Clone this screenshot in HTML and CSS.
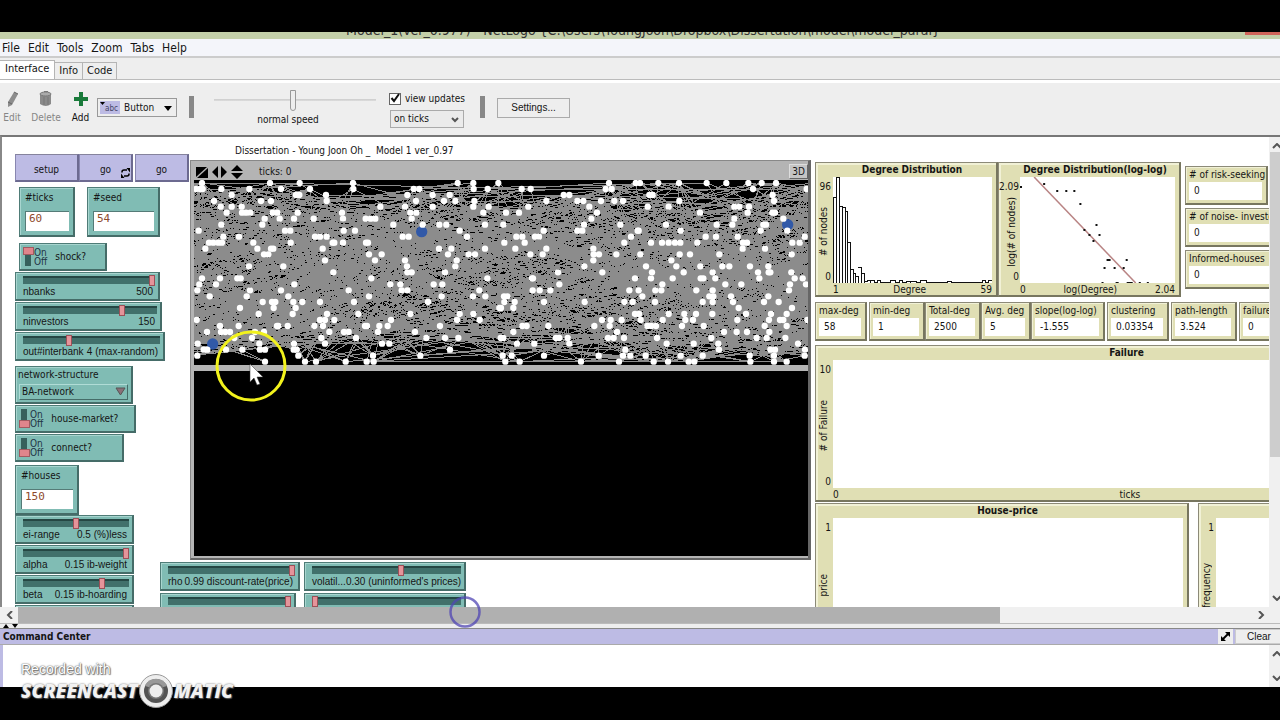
FILE: index.html
```html
<!DOCTYPE html>
<html lang="en">
<head>
<meta charset="utf-8">
<title>NetLogo</title>
<link rel="stylesheet" href="styles.css">
</head>
<body>
<div class="window">
  <header class="titlebar"><span class="title-text">Model_1(ver_0.977) - NetLogo {C:\Users\YoungJoon\Dropbox\Dissertation\model\model_paral}</span><i class="close-edge"></i></header>
  <nav class="menubar"><button>File</button><button>Edit</button><button>Tools</button><button>Zoom</button><button>Tabs</button><button>Help</button></nav>
  <nav class="tabs"><button class="tab active">Interface</button><button class="tab">Info</button><button class="tab">Code</button></nav>

  <div class="toolbar">
    <button class="tool muted edit"><svg width="16" height="18" viewBox="0 0 16 18"><path d="M10 2l4 2-6 11-4 2V12z" fill="#8d8d8d"/><path d="M10 2l4 2M4 12l4 2" stroke="#666"/></svg>Edit</button>
    <button class="tool muted delete"><svg width="16" height="18" viewBox="0 0 16 18"><path d="M2 4v10q6 4 11 0V4z" fill="#8a8a8a"/><ellipse cx="7.500" cy="4" rx="5.500" ry="2" fill="#aaa" stroke="#777"/><path d="M6 1.500h4M6 7v8M10 7v8" stroke="#777" fill="none"/></svg>Delete</button>
    <button class="tool add"><svg width="16" height="18" viewBox="0 0 16 18"><path d="M6 2h4v5h5v4h-5v5H6v-5H1V7h5z" fill="#197a3a"/></svg>Add</button>
    <label class="widget-type"><span class="abc"><svg width="5" height="4" viewBox="0 0 5 4"><path d="M0 1h5L2.500 4z"/></svg>abc</span><select aria-label="Widget type"><option>Button</option></select><svg class="drop" width="8" height="5" viewBox="0 0 8 5"><path d="M0 0h8L4 5z"/></svg></label>
    <i class="divider"></i>
    <label class="speed"><input type="range" min="0" max="100" value="49"><span>normal speed</span></label>
    <div class="updates">
      <label class="check"><input type="checkbox" checked><svg width="12" height="12" viewBox="0 0 12 12"><path d="M2.500 6l2.500 3 5-7" fill="none" stroke="#111" stroke-width="2"/></svg>view updates</label>
      <label class="tick-mode"><select aria-label="Update mode"><option>on ticks</option></select><svg class="drop" width="8" height="6" viewBox="0 0 8 6"><path d="M1 1l3 3 3-3" fill="none" stroke="#555" stroke-width="2"/></svg></label>
    </div>
    <i class="divider"></i>
    <button class="settings">Settings...</button>
  </div>

  <main class="workspace">
    <div class="board">
      <section class="controls">
        <div class="row buttons"><button class="action w64">setup</button><button class="action w54">go<svg width="9" height="10" viewBox="0 0 9 10"><path d="M1 4.500V4q0-2 2-2h3M8 5.500V6q0 2-2 2H3" fill="none" stroke="#000" stroke-width="1.500"/><path d="M5.500 0H9v4.500zM3.500 10H0V5.500z"/></svg></button><button class="action w54 apart">go</button></div>
        <div class="row inputs"><label class="field w56">#ticks<input type="text" value="60"></label><label class="field w73">#seed<input type="text" value="54"></label></div>
        <label class="switch shock w88"><input type="checkbox" checked><span class="onoff">On<br>Off</span>shock?</label>
        <label class="slider w145"><input type="range" value="100"><span><b>nbanks</b><b>500</b></span></label>
        <label class="slider w147"><input type="range" value="75"><span><b>ninvestors</b><b>150</b></span></label>
        <label class="slider w150"><input type="range" value="33"><span><b>out#interbank</b><b>4 (max-random)</b></span></label>
        <label class="chooser w118">network-structure<select><option>BA-network</option></select><svg width="11" height="9" viewBox="0 0 11 9"><path d="M1 1h9L5.500 8z" fill="#8b6f78" stroke="#555"/></svg></label>
        <label class="switch w121"><input type="checkbox"><span class="onoff">On<br>Off</span>house-market?</label>
        <label class="switch w109"><input type="checkbox"><span class="onoff">On<br>Off</span>connect?</label>
        <label class="field houses w64">#houses<input type="text" value="150"></label>
        <div class="stack">
          <label class="slider w119"><input type="range" value="50"><span><b>ei-range</b><b>0.5 (%)less</b></span></label>
          <label class="slider w119"><input type="range" value="100"><span><b>alpha</b><b>0.15 ib-weight</b></span></label>
          <label class="slider w119"><input type="range" value="76"><span><b>beta</b><b>0.15 ib-hoarding</b></span></label>
          <label class="slider w119"><input type="range" value="50" aria-label="parameter"></label>
        </div>
      </section>

      <section class="center">
        <h1 class="note">Dissertation - Young Joon Oh _&nbsp; Model 1 ver_0.97</h1>
        <div class="view">
          <div class="view-head">
            <svg width="48" height="14" viewBox="0 0 48 14"><path d="M0 2h11L0 12z"/><path d="M12 3v10H1z"/><path d="M22 1v12l-6-6zM25 1v12l6-6zM35 6l6-6 6 6zM35 8l6 6 6-6z"/></svg>
            <span>ticks: 0</span>
            <button class="three-d">3D</button>
          </div>
          <svg id="network" class="network" viewBox="0 0 1842 555" preserveAspectRatio="none"></svg>
          <div class="view-gap"></div>
          <div class="view-empty"></div>
        </div>
        <div class="row params">
          <label class="slider w140"><input type="range" value="100"><span><b>rho</b><b>0.99 discount-rate(price)</b></span></label>
          <label class="slider w162"><input type="range" value="60"><span><b>volatil...</b><b>0.30 (uninformed's prices)</b></span></label>
        </div>
        <div class="row params">
          <label class="slider w136"><input type="range" value="100" aria-label="parameter"></label>
          <label class="slider w162 late"><input type="range" value="0" aria-label="parameter"></label>
        </div>
      </section>

      <section class="charts">
        <div class="row top-charts">
          <figure class="plot w183 short">
            <figcaption>Degree Distribution</figcaption>
            <div class="yaxis"><span>96</span><em>#&nbsp;of&nbsp;nodes</em><span>0</span></div>
            <svg class="area" viewBox="0 0 158 106" preserveAspectRatio="none"><path d="M.5 106V20H3V0H6V106M3 20V106M6 29H9V106M9 30H12V106M12 34H14V65H17V106M14 65V106M17 92H20V106M20 96H22V106M22 99H25V106M25 90H28V106M28 96H31V106M31 104H34V103H41V105H44V103H47V105H57V103H62V105H66V103H69V105H73V104H83V105H87V103H93V105H114V104H118V105H149V103H152V105H155V103H158M37 103V106M57 103V106M62 103V106M77 104V106" fill="none" stroke="#111" stroke-width="1" shape-rendering="crispEdges"/></svg>
            <div class="xaxis"><span>1</span><span>Degree</span><span>59</span></div>
          </figure>
          <figure class="plot w183 short">
            <figcaption>Degree Distribution(log-log)</figcaption>
            <div class="yaxis"><span>2.09</span><em>log(#&nbsp;of&nbsp;nodes)</em><span>0</span></div>
            <svg class="area" viewBox="0 0 154 106" preserveAspectRatio="none"><path d="M14 0L115 106" stroke="#b98484" stroke-width="1.500"/><path d="M0 10h2m21-3h2m11 7h2m7 0h2m6 0h2m4 13h2m14 21h2m-14 5h2m3 5h2m8 0h2m-8 6h2m12 19h2m0 0h2m15 0h2m-24 8h2m8 0h2m7 0h2m-23 15h2m12 0h3m8 0h6m6 0h2m6 0h2" fill="none" stroke="#111" stroke-width="2"/></svg>
            <div class="xaxis"><span>0</span><span>log(Degree)</span><span>2.04</span></div>
          </figure>
          <div class="side">
            <label class="monitor w83"># of risk-seeking<output>0</output></label>
            <label class="monitor wide"># of noise- investors<output>0</output></label>
            <label class="monitor wide">Informed-houses<output>0</output></label>
          </div>
        </div>
        <div class="row monitors">
          <label class="monitor w52">max-deg<output>58</output></label>
          <span class="joined"><label class="monitor w56">min-deg<output>1</output></label><label class="monitor w56">Total-deg<output>2500</output></label><label class="monitor w50">Avg. deg<output>5</output></label><label class="monitor w74">slope(log-log)<output>-1.555</output></label></span>
          <label class="monitor w62">clustering<output>0.03354</output></label>
          <label class="monitor w66">path-length<output>3.524</output></label>
          <label class="monitor w66">failure<output>0</output></label>
        </div>
        <figure class="plot failure">
          <figcaption>Failure</figcaption>
          <div class="yaxis"><span>10</span><em>#&nbsp;of&nbsp;Failure</em><span>0</span></div>
          <div class="area"></div>
          <div class="xaxis"><span>0</span><span>ticks</span><span></span></div>
        </figure>
        <div class="row bottom-charts">
          <figure class="plot w374 tall">
            <figcaption>House-price</figcaption>
            <div class="yaxis"><span>1</span><em>price</em><span>0</span></div>
            <div class="area"></div>
            <div class="xaxis"></div>
          </figure>
          <figure class="plot w374 tall">
            <figcaption></figcaption>
            <div class="yaxis"><span>1</span><em>frequency</em><span>0</span></div>
            <div class="area"></div>
            <div class="xaxis"></div>
          </figure>
        </div>
      </section>
    </div>
    <div class="vbar"><svg width="10" height="6" viewBox="0 0 10 6"><path d="M3 5l4-4 4 4" /></svg><i class="vthumb"></i><i class="vrest"></i><svg width="10" height="6" viewBox="0 0 10 6"><path d="M3 1l4 4 4-4"/></svg></div>
  </main>
  <div class="hbar"><svg width="16" height="8" viewBox="0 0 16 8"><path d="M10 0L6 4l4 4"/></svg><i class="hthumb"></i><i class="hrest"></i><svg width="38" height="8" viewBox="0 0 38 8"><path d="M17 0l4 4-4 4"/></svg></div>
  <div class="splitter"><svg width="18" height="4" viewBox="0 0 18 4"><path d="M3 4l3-4 3 4zM12 0h6l-3 4z"/></svg></div>
  <div class="command-head"><h2>Command Center</h2><button class="expand" aria-label="Expand"><svg width="9" height="9" viewBox="0 0 9 9"><path d="M4 0h5v5zM0 4v5h5z"/><path d="M2 7l5-5" stroke="#000" stroke-width="2"/></svg></button><button class="clear">Clear</button></div>
  <div class="output"><div class="vbar mini"><svg width="10" height="6" viewBox="0 0 10 6"><path d="M3 5l4-4 4 4"/></svg><svg width="10" height="6" viewBox="0 0 10 6"><path d="M3 1l4 4 4-4"/></svg></div></div>
</div>

<svg class="halo" width="72" height="72" viewBox="0 0 72 72"><circle cx="36" cy="36" r="34" fill="none" stroke="#f2f21c" stroke-width="3"/><path d="M35 34v18l4-4 3 7 3-1-3-7h6z" fill="#fff" stroke="#333" stroke-width=".5"/></svg>
<svg class="ripple" width="34" height="34" viewBox="0 0 34 34"><circle cx="17" cy="17" r="14.500" fill="none" stroke="#5046b4" stroke-opacity=".75" stroke-width="2.500"/></svg>
<div class="watermark">
  <div class="recorded">Recorded with</div>
  <div class="brand"><span>SCREENCAST</span><svg width="36" height="36" viewBox="0 0 36 36"><circle cx="18" cy="18" r="16.500" fill="#eee" stroke="#999"/><circle cx="18" cy="18" r="12" fill="#555"/><path d="M7 13A12 12 0 0 1 29 13L22 15H14z" fill="#999"/><circle cx="18" cy="18" r="8" fill="#777"/><circle cx="18" cy="18" r="6.500" fill="#eee"/></svg><span>MATIC</span></div>
</div>
<script src="app.js"></script>
</body>
</html>
```
FILE: styles.css
```css
* { box-sizing: border-box; }
body {
  margin: 0; background: #000; color: #151515; position: relative; overflow: hidden;
  font: 10px/12px "DejaVu Sans Condensed", "Open Sans", sans-serif;
}
button, input, select, output { font: inherit; color: inherit; margin: 0; padding: 0; border: 0; }
button { background: none; }
select { appearance: none; }
svg { display: block; flex: none; }
i { display: block; flex: none; }
.window { height: 100vh; padding: 32px 0 33px; display: flex; flex-direction: column; }
.window > * { flex: none; }

.titlebar { height: 7px; background: #c3cfa9; display: flex; justify-content: center; align-items: flex-end; overflow: hidden; position: relative; padding-bottom: 1px; }
.title-text { font: 14px/16px "DejaVu Sans Condensed", "Open Sans", sans-serif; white-space: nowrap; color: #333; padding-left: 6px; }
.close-edge { position: absolute; right: 0; top: 0; width: 35px; height: 3px; background: #d0645a; }
.menubar { height: 19px; background: #f4f5fa; border-bottom: 2px solid #ccc; display: flex; gap: 8px; padding-left: 2px; font-size: 12px; }
.tabs { height: 25px; background: #eee; display: flex; align-items: flex-start; border-bottom: 3px solid #fff; box-shadow: inset 0 -1px #bbb; font-size: 11px; }
.tab { height: 18px; margin-top: 4px; border: 1px solid #b5b5b5; border-left: 0; padding: 0 4px; }
.tab.active { height: 20px; margin-top: 2px; background: #fff; padding: 0 5px 3px; }

.toolbar { height: 52px; background: #eee; display: flex; }
.tool { display: flex; flex-direction: column; align-items: center; padding-top: 7px; gap: 4px; line-height: 12px; }
.edit { width: 24px; }
.delete { width: 44px; }
.add { width: 25px; color: #111; }
.muted { color: #858585; }
.widget-type { width: 80px; height: 19px; margin: 15px 12px 0 4px; border: 1px solid #999; background: #eee; display: flex; align-items: center; position: relative; padding-left: 2px; }
.widget-type select { background: transparent; flex: 1; min-width: 0; padding-left: 4px; }
.abc { display: flex; background: #bdbbe4; font-size: 8px; height: 13px; width: 20px; align-items: flex-end; line-height: 10px; color: #446; }
.abc svg { align-self: flex-start; }
.drop { position: absolute; right: 4px; top: 50%; margin-top: -2px; pointer-events: none; }
.divider { width: 5px; height: 22px; margin-top: 13px; background: #888; }
.speed { width: 162px; margin-left: 20px; padding-top: 6px; display: flex; flex-direction: column; gap: 3px; align-items: center; }
.speed span { padding-right: 14px; }
.speed input { appearance: none; width: 100%; height: 22px; background: linear-gradient(#ccc, #ddd) center / 100% 2px no-repeat; }
.speed input::-webkit-slider-thumb { appearance: none; width: 6px; height: 21px; background: #eee; border: 1px solid #999; border-radius: 0 0 3px 3px; }
.updates { width: 100px; padding: 9px 0 0 13px; display: flex; flex-direction: column; gap: 5px; }
.check { display: flex; align-items: center; gap: 4px; position: relative; white-space: nowrap; height: 13px; }
.check input { appearance: none; width: 12px; height: 12px; border: 1px solid #666; background: #fff; }
.check svg { position: absolute; left: 0; top: 0; }
.tick-mode { width: 74px; height: 18px; margin-left: 1px; border: 1px solid #aaa; position: relative; display: flex; background: #ebebeb; }
.tick-mode select { flex: 1; background: transparent; padding-left: 3px; }
.updates + .divider { margin-left: 4px; margin-right: 12px; }
.settings { width: 73px; height: 20px; margin-top: 15px; border: 1px solid #aaa; font: 10px/14px "Liberation Sans", sans-serif; }

.window > .workspace { flex: 1; min-height: 0; border-top: 2px solid #777; border-left: 2px solid #888; background: #fff; display: flex; }
.board { flex: 1; min-width: 0; display: flex; overflow: hidden; padding-left: 13px; }
.row { display: flex; }
.controls { flex: none; width: 145px; padding-top: 17px; display: flex; flex-direction: column; align-items: flex-start; gap: 1px; }
.controls > *, .stack > *, .params > * { flex: none; }
.stack { display: flex; flex-direction: column; gap: 1px; margin-top: -1px; }
.action { height: 28px; background: #bdbbe4; border: 1px solid #8886b0; border-top-color: #85839c; border-right: 2px solid #6c6a90; border-bottom: 2px solid #6c6a90; display: flex; align-items: center; justify-content: center; padding-top: 4px; position: relative; flex: none; }
.action svg { position: absolute; right: 1px; bottom: 2px; }
.apart { margin-left: 2px; }
.inputs { margin: 4px 0 5px 4px; gap: 12px; }
.field, .slider, .switch, .chooser { background: #80bcb4; border: 1px solid #4f7c77; border-right: 2px solid #456c68; border-bottom: 2px solid #456c68; box-shadow: inset 1px 1px #a8d5cf; }
.slider, .switch { white-space: nowrap; }
.field { height: 50px; padding: 4px 4px 4px 5px; display: flex; flex-direction: column; gap: 7px; flex: none; }
.field input { width: 100%; height: 23px; background: #fff; color: #8e4a2c; padding: 0 0 6px 4px; font: 11px/14px "DejaVu Sans Mono", monospace; box-shadow: inset 1px 1px #557b77; }
.houses { margin-top: 2px; }
.switch { height: 28px; display: flex; align-items: center; gap: 8px; }
.switch input { appearance: none; flex: none; width: 6px; height: 19px; margin-left: 5px; background: #36605c; position: relative; }
.switch input::before { content: ""; position: absolute; left: -2px; bottom: 0; width: 9px; height: 6px; background: #e0858c; border: 1px solid #a05a60; }
.switch input:checked::before { bottom: auto; top: 0; }
.onoff { line-height: 9px; margin-left: -5px; color: #234; }
.shock { margin-left: 4px; }
.slider { height: 29px; padding: 2px 3px 0 7px; display: flex; flex-direction: column; gap: 1px; font-family: "Liberation Sans", sans-serif; }
.slider b { font-weight: 400; }
.slider span { display: flex; justify-content: space-between; padding-right: 2px; }
.slider input { appearance: none; width: 100%; height: 10px; background: linear-gradient(#254744 2px, #41706b 2px) center / 100% 8px no-repeat; }
.slider input::-webkit-slider-thumb { appearance: none; width: 6px; height: 11px; background: #e5949a; border: 1px solid #9c5058; }
.chooser { height: 38px; margin-top: 4px; padding: 2px; position: relative; display: flex; flex-direction: column; gap: 3px; }
.chooser select { height: 17px; width: 109px; margin-left: 1px; padding-left: 2px; border: 1px solid #b0dcd6; border-right-color: #456c68; border-bottom-color: #456c68; background: #80bcb4; }
.chooser svg { position: absolute; right: 5px; bottom: 6px; pointer-events: none; }

.center { flex: none; width: 651px; padding-top: 7px; }
.note { margin: 0 0 2px 75px; font-size: 10px; line-height: 14px; font-weight: 400; height: 14px; white-space: nowrap; }
.view { margin-left: 30px; height: 400px; background: #b4b4b4; border: 1px solid #888; border-right: 3px solid #666; border-bottom: 2px solid #666; padding: 2px 0 2px 3px; display: flex; flex-direction: column; }
.view > * { flex: none; }
.view-head { height: 17px; display: flex; align-items: center; gap: 15px; padding-left: 2px; }
.three-d { margin-left: auto; width: 19px; height: 15px; border: 1px solid #ddd; border-right-color: #666; border-bottom-color: #666; background: #c4c4c4; }
.network { width: 100%; height: 185px; background: #000; }
.view-gap { height: 6px; }
.view > .view-empty { flex: 1; background: #000; }
.params { gap: 4px; margin-top: 2px; }
.late { margin-left: 4px; }

.charts { flex: 1; min-width: 0; margin-left: 4px; padding-top: 25px; }
.top-charts { align-items: flex-start; }
.plot { margin: 0; flex: none; background: #e0dfb4; border: 1px solid #8c8a78; border-right: 2px solid #77765f; border-bottom: 2px solid #77765f; box-shadow: inset 2px 2px #f1f1d6; display: grid; grid-template: 14px 1fr 12px / 17px 1fr; padding-right: 4px; }
.plot figcaption { grid-column: 1 / -1; text-align: center; font-weight: 700; padding-left: 16px; padding-top: 1px; }
.plot .area { width: 100%; height: 100%; background: #fff; min-width: 0; min-height: 0; }
.yaxis { display: flex; flex-direction: column; justify-content: space-between; align-items: flex-end; padding: 4px 2px 0 0; min-height: 0; }
.yaxis em { font-style: normal; writing-mode: vertical-rl; transform: rotate(180deg); line-height: 12px; margin-right: 1px; }
.xaxis { grid-column: 2; display: flex; justify-content: space-between; line-height: 13px; }
.short { height: 135px; }
.short + .short { grid-template-columns: 21px 1fr; }
.short + .short .yaxis { padding-right: 1px; }
.side { padding: 4px 0 0 4px; display: flex; flex-direction: column; gap: 3px; }
.monitor { background: #e0dfb4; border: 1px solid #8c8a78; border-right: 2px solid #77765f; border-bottom: 2px solid #77765f; box-shadow: inset 1px 1px #f1f1d6; height: 39px; padding: 2px 4px 3px 3px; display: flex; flex-direction: column; gap: 1px; white-space: nowrap; flex: none; }
.monitor output { flex: 1; background: #fff; padding: 2px 5px 0; line-height: 14px; }
.wide { width: 120px; }
.monitors { margin: 5px 0 4px; gap: 2px; }
.joined { display: flex; flex: none; }
.failure { width: 612px; height: 157px; }
.tall { height: 160px; }
.bottom-charts { gap: 9px; margin-top: 1px; }

.vbar { flex: none; width: 11px; background: #f0f0f0; display: flex; flex-direction: column; align-items: flex-end; justify-content: space-between; padding: 6px 0; }
.vbar path, .hbar path { fill: none; stroke: #555; stroke-width: 2; }
.vthumb { width: 10px; flex: 306 0 0; margin-top: 3px; background: #cdcdcd; }
.vrest { flex: 138 0 0; }
.mini { height: 100%; }
.hbar { height: 16px; background: #f0f0f0; display: flex; align-items: center; padding-left: 2px; }
.hthumb { flex: 982 0 0; height: 16px; background: #b0b0b0; }
.hrest { flex: 242 0 0; }
.splitter { height: 6px; background: #eee; border-top: 1px solid #bbb; border-bottom: 1px solid #888; }
.command-head { height: 16px; background: #bdbbe4; display: flex; align-items: center; border-bottom: 1px solid #aaa; }
.command-head h2 { margin: 0; padding-left: 3px; font-size: 10px; flex: 1; }
.expand { width: 15px; height: 15px; padding: 3px; background: #eee; margin-right: 2px; }
.clear { width: 45px; height: 15px; border: 1px solid #ccc; background: #eee; font: 10px/12px "Liberation Sans", sans-serif; border-right: 0; padding-left: 2px; }
.output { height: 42px; background: #fff; border-left: 3px solid #bdbbe4; display: flex; justify-content: flex-end; }

.halo { position: absolute; left: 215px; top: 330px; }
.ripple { position: absolute; left: 448px; top: 595px; }
.watermark { position: absolute; left: 21px; bottom: 11px; color: #f2f2f2; }
.recorded { font: 14px/16px "Liberation Sans", sans-serif; color: #fff; text-shadow: 0 0 1px #555, 1px 1px 1px #777, 0 0 2px #777; margin-bottom: -4px; }
.brand { display: flex; align-items: center; height: 36px; font: italic 800 19px/20px "Liberation Sans Narrow", "Open Sans", sans-serif; text-shadow: 0 0 2px #666, 1px 1px 1px #555; }

.w50 { width: 50px; } .w52 { width: 52px; } .w54 { width: 54px; } .w56 { width: 56px; } .w62 { width: 62px; }
.w64 { width: 64px; } .w66 { width: 66px; } .w73 { width: 73px; } .w74 { width: 74px; } .w83 { width: 83px; }
.w88 { width: 88px; } .w109 { width: 109px; } .w118 { width: 118px; } .w119 { width: 119px; } .w121 { width: 121px; }
.w136 { width: 136px; } .w140 { width: 140px; } .w145 { width: 145px; } .w147 { width: 147px; } .w150 { width: 150px; }
.w162 { width: 162px; } .w183 { width: 183px; } .w374 { width: 374px; }
```
FILE: app.js
```js
// Agents of the world, one line per lattice row: west half | east half.
const rows = `36,240,329,489,803,850,925|327,407,420,475,537,620,679,745,785,828
18,30,38,94,178,273,360,490,671,688,851,893|65,92,317,335,759,920
125,318,328,408,652,728,779|191,208,448,458,818
72,213,243,410,678,762,796,853|139,232,250,303,343,369,538,822
92,125,155,571,645,728,850,896|85,268,443,506,703,718,747
110,156,168,181,248,262,323,456,661,679,880|18,57,291,600,743,817,825
224,269,312,371,459,527,542,556,665|274,703,850
94,217,610,698,748,769,885|10,252,361,498,650,697,790,798
26,285,301,461,495,809|131,232,247,413,416,542,782,862
100,147,375,390,410,638,656,831|49,67,105,117,393,617,648,713,914
57,70,85,96,190,302,428,433,459,528,534|13,74,373,453,486,506,525,541,592,729,741,877,899
46,202,243,250,398,747,784,885|46,139,280,728,795
222,235,537,575,774,836,855|91,128,281,297,349,421,539,570,658,875
405,555,645,800|280,514
177,280,651,796|253,438,529,601,667,688,750,805
430,652,665,765|174,307,456,551,638,774,806,811,874
36,90,142,152,544,892|96,99,405,453,518,602,610,646,778,884,908
28,78,313,601,631,731,757|178,487,676,724,870,918
22,180,273,476,635,652,868|98,119,151,388,416,466,484,589,638,867
59,170,295,537,755,849,886|12,22,427,628,640,693,805
218,246,256,310,337,390,492,714|13,44,132,254,373,398,465,608,638,699,792,836
150,251,317,928|3,40,716,876
206,308,411,505,661,809,850|405,417,506,553,588,637,738,813,860
20,390,405,433,603,801,869|306,332,365,422,488,556,579,712,807,840,850,922
90,146,261,265,293,373,399,525,531,568,593,750|67,80,145,283,329,442,454,468,546,611,794,860
51,93,106,120,195,222,418,462,476,564,675|40,351,672,710,741,808
133,186,394,498,709,765,805|2,10,168,178,203,324,341,372,471,634,770,800,856
23,208,312,405,576,598|51,103,208,500,581,655,894
41,52,108,157,210,225,311,320,780|376,657,811,825,915
22,325,549,691|8,35,132,296,369,391,437,542,608,749,822,914
225,345,378,467,530,551|16,59,243,357,461,504,566,583,751,822,860`;

const WIDTH = 1842;
const nodes = [];
rows.split("\n").forEach((row, k) => {
  row.split("|").forEach((half, side) => {
    half.split(",").forEach(x => nodes.push([Number(x) + (side ? 918 : -12), Math.round(9 + k * 17.87)]));
  });
});

let seed = 54;
const random = () => (seed = (seed * 16807) % 2147483647) / 2147483647;

// Preferential attachment: early picks are more likely to be linked again.
// The three large agents are the first hubs.
const hubs = [[683, 155], [1781, 134], [56, 492]];
const order = hubs.concat(nodes.map(n => [random(), n]).sort((a, b) => a[0] - b[0]).map(p => p[1]));
let d = "";
const line = (x1, y1, x2, y2) => { d += `M${x1} ${y1}L${x2} ${y2}`; };
order.forEach((n, i) => {
  for (let e = 0; e < 3; e++) {
    const m = order[Math.floor(Math.pow(random(), 1.5) * (i + 1))];
    const dx = m[0] - n[0];
    if (Math.abs(dx) > WIDTH / 2) {
      // The world wraps around horizontally.
      const shift = dx > 0 ? -WIDTH : WIDTH;
      line(n[0], n[1], m[0] + shift, m[1]);
      line(n[0] - shift, n[1], m[0], m[1]);
    } else {
      line(n[0], n[1], m[0], m[1]);
    }
  }
});

const dots = nodes.map(n => `<circle cx="${n[0]}" cy="${n[1]}" r="9.5"/>`).join("");
document.getElementById("network").innerHTML =
  `<path d="${d}" stroke="#8c8c8c" stroke-width="3" fill="none" shape-rendering="crispEdges"/>` +
  `<g fill="#3159a8"><circle cx="683" cy="155" r="17"/><circle cx="1781" cy="134" r="17"/><circle cx="56" cy="492" r="17"/></g>` +
  `<g fill="#fff">${dots}</g>`;
```
